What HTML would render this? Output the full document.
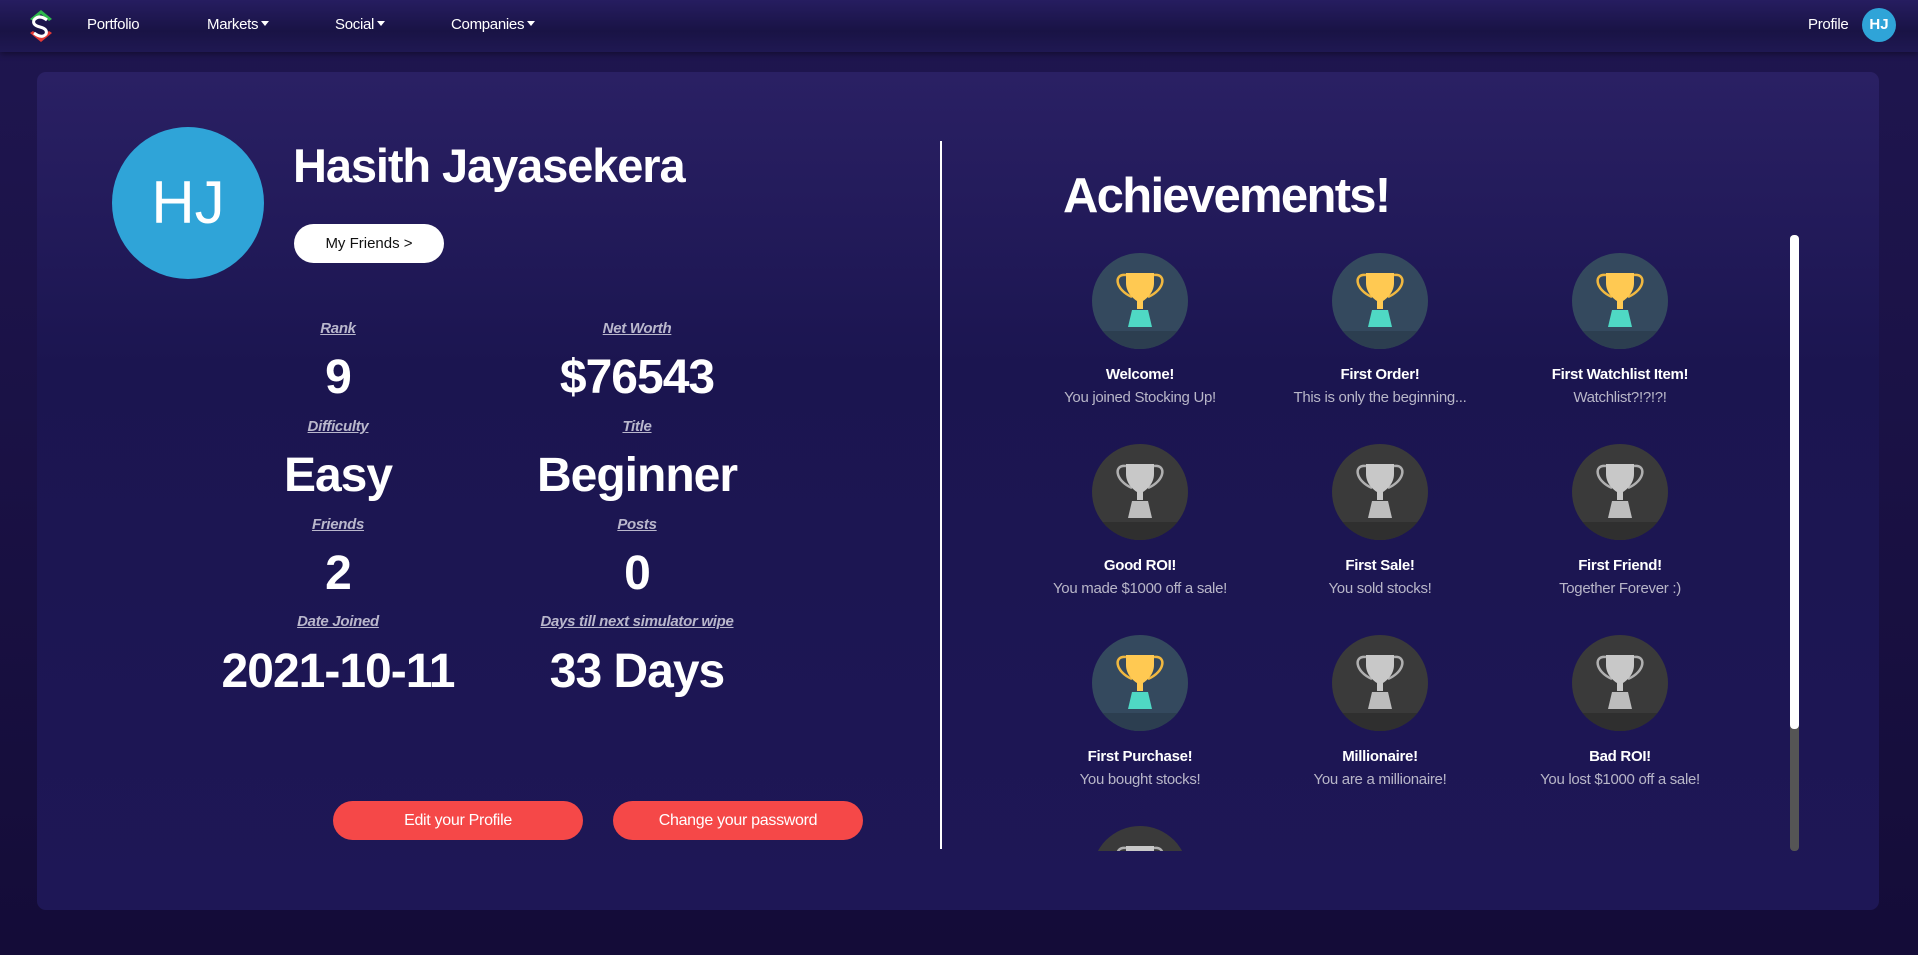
<!DOCTYPE html>
<html><head><meta charset="utf-8"><style>
*{margin:0;padding:0;box-sizing:border-box}
body{width:1918px;height:955px;overflow:hidden;font-family:"Liberation Sans",sans-serif;background:linear-gradient(#1f1650,#140c38);position:relative;color:#fff}
.nav{position:absolute;left:0;top:0;width:1918px;height:52px;background:linear-gradient(#261d60,#191345 60%,#1f1852);box-shadow:0 2px 6px rgba(0,0,0,.4)}
.nav a{position:absolute;top:16px;font-size:15px;color:#fff;letter-spacing:-.3px}
.caret{display:inline-block;border-left:4px solid transparent;border-right:4px solid transparent;border-top:5px solid #fff;margin-left:3px;vertical-align:3px}
.card{position:absolute;left:37px;top:72px;width:1842px;height:838px;border-radius:9px;background:linear-gradient(#2a2064,#1b1550 35%,#1e1756)}
.abs{position:absolute}
.lbl{position:absolute;width:260px;text-align:center;font-size:15px;font-style:italic;font-weight:bold;color:#b9b7cc;text-decoration:underline;letter-spacing:-.3px}
.val{position:absolute;width:320px;text-align:center;font-size:48px;font-weight:bold;line-height:1;letter-spacing:-1px}
.btn{position:absolute;height:39px;border-radius:20px;background:#f54848;color:#fff;font-size:16px;text-align:center;line-height:39px;letter-spacing:-.3px}
.ach{position:absolute;width:260px;text-align:center;letter-spacing:-.3px}
.ach svg{display:block;margin:0 auto}
.ach b{display:block;font-size:15px;margin-top:17px}
.ach span{display:block;font-size:15px;color:#b8b6c8;margin-top:6px}
</style></head><body>
<div class="nav">
<svg class="abs" style="left:25px;top:8px" width="32" height="36" viewBox="0 0 32 36"><path d="M16 2 L5 11 L8 13 L16 6 L24 13 L27 11Z" fill="#2db84b"/><path d="M16 34 L5 25 L8 23 L16 30 L24 23 L27 25Z" fill="#e53935"/><path d="M22 12 Q14 6 9 12 Q7 17 15 19 Q23 21 21 26 Q17 31 9 25" fill="none" stroke="#fff" stroke-width="3"/></svg>
<a style="left:87px">Portfolio</a>
<a style="left:207px">Markets<span class="caret"></span></a>
<a style="left:335px">Social<span class="caret"></span></a>
<a style="left:451px">Companies<span class="caret"></span></a>
<a style="left:1808px">Profile</a>
<div class="abs" style="left:1862px;top:8px;width:34px;height:34px;border-radius:50%;background:#2fa4d8;font-weight:bold;font-size:15px;text-align:center;line-height:34px">HJ</div>
</div>
<div class="card"></div>
<div class="abs" style="left:112px;top:127px;width:152px;height:152px;border-radius:50%;background:#2fa4d8;font-size:60px;text-align:center;line-height:152px">HJ</div>
<div class="abs" style="left:293px;top:138px;font-size:47px;font-weight:bold;letter-spacing:-1.1px">Hasith Jayasekera</div>
<div class="abs" style="left:294px;top:224px;width:150px;height:39px;border-radius:20px;background:#fff;color:#111;font-size:15px;text-align:center;line-height:39px">My Friends &gt;</div>
<div class="abs" style="left:940px;top:141px;width:2px;height:708px;background:#fff"></div>

<div class="lbl" style="left:208px;top:320px">Rank</div><div class="val" style="left:178px;top:354px">9</div>
<div class="lbl" style="left:507px;top:320px">Net Worth</div><div class="val" style="left:477px;top:354px">$76543</div>
<div class="lbl" style="left:208px;top:418px">Difficulty</div><div class="val" style="left:178px;top:452px">Easy</div>
<div class="lbl" style="left:507px;top:418px">Title</div><div class="val" style="left:477px;top:452px">Beginner</div>
<div class="lbl" style="left:208px;top:516px">Friends</div><div class="val" style="left:178px;top:550px">2</div>
<div class="lbl" style="left:507px;top:516px">Posts</div><div class="val" style="left:477px;top:550px">0</div>
<div class="lbl" style="left:208px;top:613px">Date Joined</div><div class="val" style="left:178px;top:648px">2021-10-11</div>
<div class="lbl" style="left:457px;top:613px;width:360px">Days till next simulator wipe</div><div class="val" style="left:477px;top:648px">33 Days</div>

<div class="btn" style="left:333px;top:801px;width:250px">Edit your Profile</div>
<div class="btn" style="left:613px;top:801px;width:250px">Change your password</div>

<div class="abs" style="left:1063px;top:168px;font-size:49px;font-weight:bold;letter-spacing:-1.7px">Achievements!</div>

<svg width="0" height="0" style="position:absolute"><defs>
<clipPath id="cc"><circle cx="48" cy="48" r="48"/></clipPath>
<g id="gold"><circle cx="48" cy="48" r="48" fill="#34495e"/><rect x="0" y="78" width="96" height="20" fill="#2c3e50" clip-path="url(#cc)"/>
<path d="M34 22 C22 20 22 36 40 44 M62 22 C74 20 74 36 56 44" fill="none" stroke="#f0b840" stroke-width="2.5"/>
<path d="M34 20 H62 V30 C62 40 54 46 51 48 V56 H45 V48 C42 46 34 40 34 30Z" fill="#ffc952"/>
<path d="M40 57 H56 L60 74 H36Z" fill="#4fd8c4"/></g>
<g id="grey"><circle cx="48" cy="48" r="48" fill="#3a3a3a"/><rect x="0" y="78" width="96" height="20" fill="#2f2f2f" clip-path="url(#cc)"/>
<path d="M34 22 C22 20 22 36 40 44 M62 22 C74 20 74 36 56 44" fill="none" stroke="#b0b0b0" stroke-width="2.5"/>
<path d="M34 20 H62 V30 C62 40 54 46 51 48 V56 H45 V48 C42 46 34 40 34 30Z" fill="#c8c8c8"/>
<path d="M40 57 H56 L60 74 H36Z" fill="#bdbdbd"/></g>
</defs></svg>

<div class="abs" style="left:990px;top:230px;width:790px;height:621px;overflow:hidden">
<div class="ach" style="left:20px;top:23px"><svg width="96" height="96"><use href="#gold"/></svg><b>Welcome!</b><span>You joined Stocking Up!</span></div>
<div class="ach" style="left:260px;top:23px"><svg width="96" height="96"><use href="#gold"/></svg><b>First Order!</b><span>This is only the beginning...</span></div>
<div class="ach" style="left:500px;top:23px"><svg width="96" height="96"><use href="#gold"/></svg><b>First Watchlist Item!</b><span>Watchlist?!?!?!</span></div>
<div class="ach" style="left:20px;top:214px"><svg width="96" height="96"><use href="#grey"/></svg><b>Good ROI!</b><span>You made $1000 off a sale!</span></div>
<div class="ach" style="left:260px;top:214px"><svg width="96" height="96"><use href="#grey"/></svg><b>First Sale!</b><span>You sold stocks!</span></div>
<div class="ach" style="left:500px;top:214px"><svg width="96" height="96"><use href="#grey"/></svg><b>First Friend!</b><span>Together Forever :)</span></div>
<div class="ach" style="left:20px;top:405px"><svg width="96" height="96"><use href="#gold"/></svg><b>First Purchase!</b><span>You bought stocks!</span></div>
<div class="ach" style="left:260px;top:405px"><svg width="96" height="96"><use href="#grey"/></svg><b>Millionaire!</b><span>You are a millionaire!</span></div>
<div class="ach" style="left:500px;top:405px"><svg width="96" height="96"><use href="#grey"/></svg><b>Bad ROI!</b><span>You lost $1000 off a sale!</span></div>
<div class="ach" style="left:20px;top:596px"><svg width="96" height="96"><use href="#grey"/></svg></div>
</div>
<div class="abs" style="left:1790px;top:235px;width:9px;height:616px;border-radius:4px;background:#555"></div>
<div class="abs" style="left:1790px;top:235px;width:9px;height:494px;border-radius:4px;background:#fff"></div>
</body></html>
